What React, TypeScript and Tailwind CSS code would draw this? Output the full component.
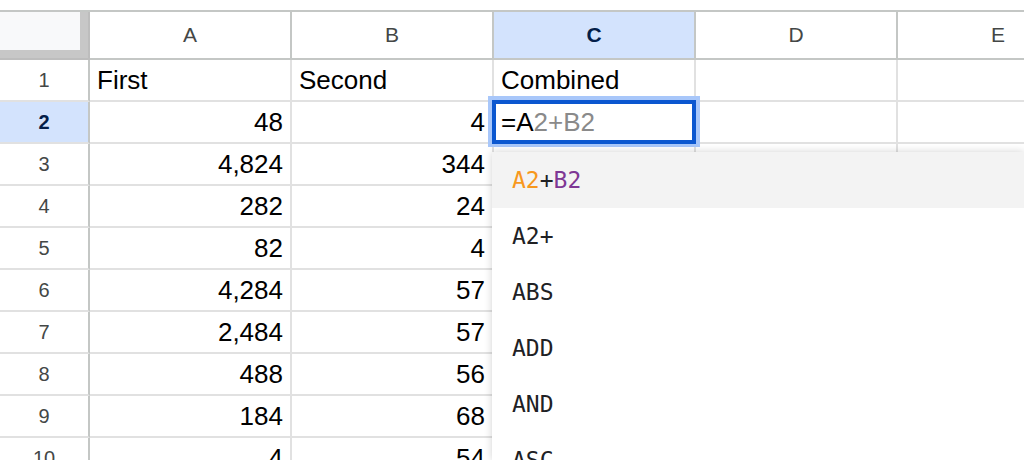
import React from 'react';

const cols = ['A', 'B', 'C', 'D', 'E'];

// valores de las filas 1..10 (columna A, B, C)
const rows: string[][] = [
  ['First', 'Second', 'Combined'],
  ['48', '4', ''],
  ['4,824', '344', ''],
  ['282', '24', ''],
  ['82', '4', ''],
  ['4,284', '57', ''],
  ['2,484', '57', ''],
  ['488', '56', ''],
  ['184', '68', ''],
  ['4', '54', ''],
];

const suggestions = ['A2+', 'ABS', 'ADD', 'AND', 'ASC', 'ASIN'];

const cellFont = { fontFamily: '"Liberation Sans", Arial, sans-serif' };
const monoFont = { fontFamily: '"DejaVu Sans Mono", Menlo, monospace' };

const App: React.FC = () => {
  return (
    <div className="relative w-[1024px] h-[460px] overflow-hidden bg-white" style={cellFont}>
      <div className="pt-[10px]">
        <div className="w-max border-t-2 border-[#c4c7c5]">
          {/* cabecera de columnas */}
          <div className="flex">
            <div className="w-[90px] h-[48px] bg-[#c7c7c7] border-r-2 border-b-2 border-[#bdbdbd]">
              <div className="w-[80px] h-[38px] bg-[#f8f9fa]" />
            </div>
            {cols.map(c => (
              <div
                key={c}
                className={
                  c === 'C'
                    ? 'w-[202px] h-[48px] flex items-center justify-center border-r-2 border-b-2 border-[#c4c7c5] bg-[#d3e3fd] text-[#041e49] font-bold text-[21px]'
                    : 'w-[202px] h-[48px] flex items-center justify-center border-r-2 border-b-2 border-[#c4c7c5] text-[#444746] text-[21px]'
                }
              >
                {c}
              </div>
            ))}
          </div>

          {rows.map((r, i) => {
            const n = i + 1;
            const selected = n === 2;
            return (
              <div key={n} className="flex">
                <div
                  className={
                    selected
                      ? 'w-[90px] h-[42px] flex items-center justify-center border-r-2 border-b-2 border-r-[#c4c7c5] border-b-[#e1e1e1] bg-[#d3e3fd] text-[#041e49] font-bold text-[20px]'
                      : 'w-[90px] h-[42px] flex items-center justify-center border-r-2 border-b-2 border-r-[#c4c7c5] border-b-[#e1e1e1] text-[#444746] text-[20px]'
                  }
                >
                  {n}
                </div>
                {cols.map((c, j) => {
                  const v = r[j] ?? '';
                  const isText = n === 1;
                  return (
                    <div
                      key={c}
                      className={
                        isText
                          ? 'w-[202px] h-[42px] flex items-center justify-start pl-[7px] border-r-2 border-b-2 border-[#e1e1e1] text-black text-[26px] leading-none'
                          : 'w-[202px] h-[42px] flex items-center justify-end pr-[7px] border-r-2 border-b-2 border-[#e1e1e1] text-black text-[26px] leading-none'
                      }
                    >
                      {v}
                    </div>
                  );
                })}
              </div>
            );
          })}
        </div>
      </div>

      {/* editor de celda C2 */}
      <div className="absolute left-[488px] top-[96px] w-[212px] h-[51px] border-4 border-b-[3px] border-[#a8c7fa]">
        <div className="w-full h-[44px] border-4 border-[#0b57d0] bg-white flex items-center pl-[5px] text-[26px] leading-none">
          <span className="text-black">=A</span>
          <span className="text-[#8a8a8a]">2+B2</span>
        </div>
      </div>

      {/* autocompletado */}
      <div className="absolute left-[492px] top-[152px] right-0 bottom-0 bg-white shadow-[0_0_8px_rgba(0,0,0,0.18)]" style={monoFont}>
        <div className="h-[56px] bg-[#f3f3f3] flex items-center pl-[20px] text-[23px]">
          <span className="text-[#f7981d]">A2</span>
          <span className="text-[#202124]">+</span>
          <span className="text-[#7e3794]">B2</span>
        </div>
        {suggestions.map(s => (
          <div key={s} className="h-[56px] flex items-center pl-[20px] text-[23px] text-[#202124]">
            {s}
          </div>
        ))}
      </div>
    </div>
  );
};

export default App;
